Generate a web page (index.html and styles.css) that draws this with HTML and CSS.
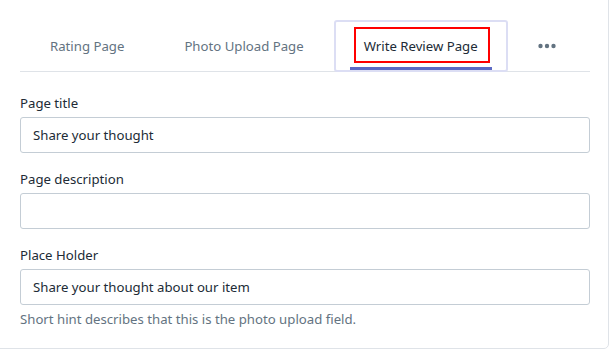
FILE: index.html
```html
<!DOCTYPE html>
<html lang="en">
<head>
    <meta charset="UTF-8">
    <meta name="viewport" content="width=device-width, initial-scale=1.0">
    <title>Review Pages</title>
    <link rel="stylesheet" href="styles.css">
</head>
<body>

    <div class="card">
        <ul class="tabs">
            <li class="tab">Rating Page</li>
            <li class="tab">Photo Upload Page</li>
            <li class="tab tab-active">
                Write Review Page
                <span class="highlight"></span>
            </li>
            <li class="tab tab-more">
                <svg width="18" height="6" viewBox="0 0 18 6">
                    <circle cx="2.5" cy="3" r="2.2" fill="#637381"/>
                    <circle cx="9" cy="3" r="2.2" fill="#637381"/>
                    <circle cx="15.5" cy="3" r="2.2" fill="#637381"/>
                </svg>
            </li>
        </ul>

        <div class="form">
            <div class="field">
                <label for="pageTitle">Page title</label>
                <input type="text" id="pageTitle" value="Share your thought">
            </div>
            <div class="field">
                <label for="pageDescription">Page description</label>
                <input type="text" id="pageDescription">
            </div>
            <div class="field">
                <label for="placeHolder">Place Holder</label>
                <input type="text" id="placeHolder" value="Share your thought about our item">
                <p class="hint">Short hint describes that this is the photo upload field.</p>
            </div>
        </div>
    </div>

</body>
</html>
```

FILE: styles.css
```css
        body {
            font-family: "Noto Sans", Arial, sans-serif;
            font-size: 13.2px;
            line-height: 20px;
            color: #212b36;
            background-color: #fff;
            margin: 0;
            padding: 0;
        }

        .card {
            margin: -8px 1px 0 -8px;
            padding: 27px 18px 19px 27px;
            border: 1px solid #dfe3e8;
            border-radius: 5px;
            background-color: #fff;
        }

        .tabs {
            display: flex;
            list-style: none;
            margin: 0;
            padding: 0;
            border-bottom: 1px solid #dfe3e8;
        }

        .tab {
            position: relative;
            display: flex;
            align-items: center;
            height: 51px;
            padding: 0 30px;
            color: #637381;
            white-space: nowrap;
        }

        .tab-active {
            color: #212b36;
            height: 52px;
            margin-bottom: -1px;
            box-sizing: border-box;
            border: 2px solid #dcdef4;
            border-radius: 3px;
            padding: 0 28px;
        }

        .tab-active::after {
            content: "";
            position: absolute;
            left: 14px;
            right: 14px;
            bottom: 0;
            height: 3px;
            background-color: #5c6ac4;
        }

        /* red marker drawn over the active tab label */
        .highlight {
            position: absolute;
            top: 5px;
            bottom: 7px;
            left: 18px;
            right: 16px;
            border: 2px solid #ff0000;
        }

        .tab-more svg {
            display: block;
        }

        .form {
            padding-top: 21px;
        }

        .field {
            margin-bottom: 16px;
        }

        .field:last-child {
            margin-bottom: 0;
        }

        .field label {
            display: block;
            margin-bottom: 4px;
        }

        .field input {
            display: block;
            width: 100%;
            height: 36px;
            box-sizing: border-box;
            padding: 0 12px;
            border: 1px solid #c4cdd5;
            border-radius: 3px;
            font-family: inherit;
            font-size: 13.2px;
            color: #212b36;
        }

        .hint {
            margin: 4px 0 0;
            color: #637381;
        }
```
